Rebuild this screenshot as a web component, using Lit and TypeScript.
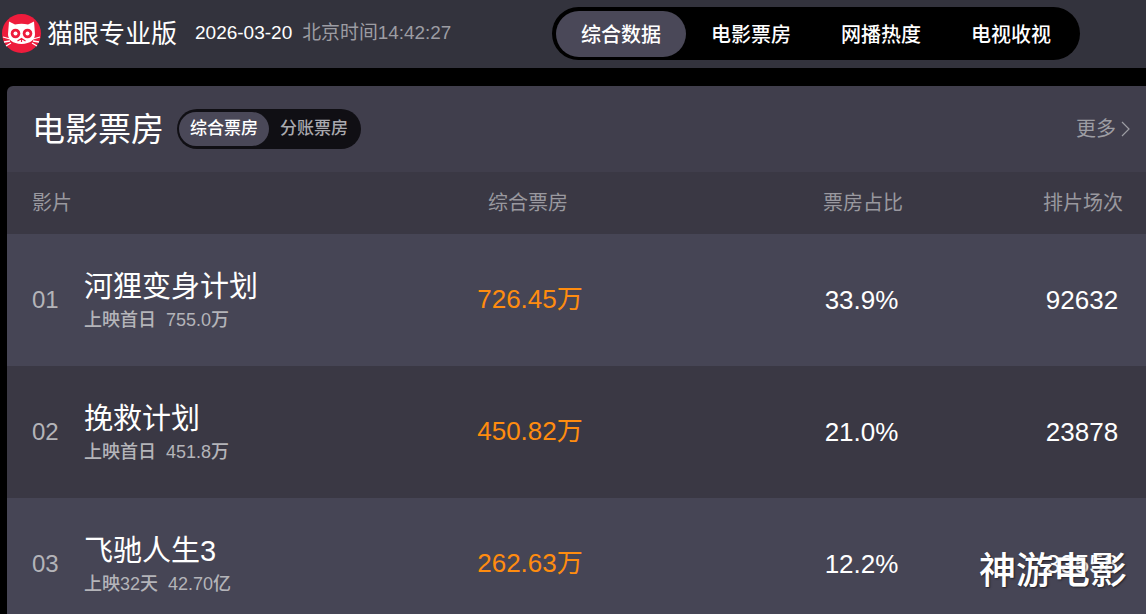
import { LitElement, html, css } from "lit";
import { customElement } from "lit/decorators.js";

const rows = [
  { no: "01", name: "河狸变身计划", days: "上映首日", total: "755.0万", box: "726.45万", share: "33.9%", shows: "92632" },
  { no: "02", name: "挽救计划", days: "上映首日", total: "451.8万", box: "450.82万", share: "21.0%", shows: "23878" },
  { no: "03", name: "飞驰人生3", days: "上映32天", total: "42.70亿", box: "262.63万", share: "12.2%", shows: "33558" },
];

@customElement("app-root")
export class AppRoot extends LitElement {
  static styles = css`
    :host {
      display: block;
      width: 1146px;
      height: 614px;
      overflow: hidden;
      position: relative;
      background: #000;
      color: #fff;
      font-family: "Liberation Sans", "Noto Sans CJK SC", sans-serif;
    }
    .top {
      height: 68px;
      background: #33333d;
      display: flex;
      align-items: center;
      position: relative;
    }
    .logo { width: 40px; height: 40px; margin: 0 0 0 2px; flex: none; }
    .brand { font-size: 26px; margin-left: 5px; white-space: nowrap; line-height: 26px; }
    .date { font-size: 19px; line-height: 22px; margin-left: 18px; margin-bottom: 3px; white-space: nowrap; }
    .time { font-size: 18.9px; line-height: 22px; margin-left: 10px; margin-bottom: 3px; color: #9d9da3; white-space: nowrap; }
    .nav {
      margin-left: auto;
      margin-right: 66px;
      margin-bottom: 2px;
      display: flex;
      height: 53px;
      box-sizing: border-box;
      padding: 4px;
      background: #000;
      border-radius: 27px;
    }
    .nav div {
      width: 130px;
      height: 46px;
      line-height: 46px;
      text-align: center;
      font-size: 20px;
      font-weight: 500;
      border-radius: 23px;
    }
    .nav div span { position: relative; top: 1px; }
    .nav .on { background: #4a4858; }
    .card {
      margin: 18px 0 0 7px;
      border-radius: 6px 0 0 0;
      overflow: hidden;
    }
    .head {
      height: 86px;
      background: #403e4c;
      display: flex;
      align-items: center;
      padding: 0 16px 0 25px;
    }
    .title { font-size: 33px; line-height: 1; width: 132px; white-space: nowrap; }
    .tabs {
      margin-left: 13px;
      display: flex;
      height: 40px;
      box-sizing: border-box;
      padding: 3px 2px;
      background: #100f14;
      border-radius: 20px;
    }
    .tabs div {
      width: 90px;
      height: 34px;
      line-height: 34px;
      text-align: center;
      font-size: 17px;
      font-weight: 500;
      color: #a9a9ae;
      border-radius: 17px;
    }
    .tabs .on { background: #4a4858; color: #fff; }
    .more {
      margin-left: auto;
      display: flex;
      align-items: center;
      gap: 5px;
      font-size: 20px;
      line-height: 24px;
      color: #9d9da3;
    }
    .grid {
      display: grid;
      grid-template-columns: 52px 274px 340px 330px 110px;
      align-items: center;
      padding-left: 25px;
    }
    .th {
      height: 62px;
      box-sizing: border-box;
      background: #3a3844;
      font-size: 20px;
      line-height: 24px;
      color: #99989f;
    }
    .c2 { grid-column: 1 / span 2; }
    .center { text-align: center; }
    .row { height: 132px; font-size: 26px; line-height: 30px; background: #464555; }
    .row.alt { background: #3a3844; }
    .no { font-size: 24px; color: #b4b4b9; }
    .info { padding-top: 2px; }
    .name { font-size: 29px; line-height: 34px; white-space: nowrap; }
    .sub { font-size: 18px; line-height: 24px; margin-top: 4px; font-weight: 500; color: #b4b4b9; white-space: nowrap; }
    .sub span { margin-left: 10px; }
    .box { color: #ff8c0f; padding-left: 4px; padding-bottom: 2px; }
    .share { padding-right: 3px; }
    .shows { padding-right: 2px; }
    .mark {
      position: absolute;
      left: 979px;
      top: 549px;
      font-size: 37px;
      line-height: 46px;
      font-weight: 500;
      white-space: nowrap;
      text-shadow: 1px 1px 2px rgba(0, 0, 0, 0.55);
    }
  `;

  render() {
    return html`
      <div class="top">
        <svg class="logo" viewBox="0 0 40 40">
          <circle cx="19.5" cy="19.5" r="19.5" fill="#ee1c3c" />
          <path d="M7 7.5 L13 10.5 Q19.5 9 26 10.5 L32 7.5 L33 20 Q33 29 19.5 30 Q6 29 6 20 Z" fill="#fff" />
          <circle cx="13.5" cy="19.5" r="4.8" fill="#ee1c3c" />
          <circle cx="25.5" cy="19.5" r="4.8" fill="#ee1c3c" />
          <circle cx="13.5" cy="19.5" r="2" fill="#fff" />
          <circle cx="25.5" cy="19.5" r="2" fill="#fff" />
          <path d="M15.5 27 L19.5 24.5 L23.5 27 M19.5 24.5 V28" stroke="#ee1c3c" stroke-width="1.2" fill="none" />
          <path d="M1 23 L8 25 M2 28 L8 27 M4 32 L9 29 M38 23 L31 25 M37 28 L31 27 M35 32 L30 29" stroke="#fff" stroke-width="1.3" fill="none" />
        </svg>
        <div class="brand">猫眼专业版</div>
        <div class="date">2026-03-20</div>
        <div class="time">北京时间14:42:27</div>
        <div class="nav">
          <div class="on"><span>综合数据</span></div>
          <div><span>电影票房</span></div>
          <div><span>网播热度</span></div>
          <div><span>电视收视</span></div>
        </div>
      </div>
      <div class="card">
        <div class="head">
          <div class="title">电影票房</div>
          <div class="tabs">
            <div class="on">综合票房</div>
            <div>分账票房</div>
          </div>
          <div class="more">
            更多
            <svg width="9" height="16" viewBox="0 0 9 16"><path d="M1 1 L8 8 L1 15" stroke="#9d9da3" stroke-width="1.2" fill="none" /></svg>
          </div>
        </div>
        <div class="grid th">
          <div class="c2">影片</div>
          <div class="center">综合票房</div>
          <div class="center">票房占比</div>
          <div class="center">排片场次</div>
        </div>
        ${rows.map(
          (r, i) => html`
            <div class="grid row ${i % 2 ? "alt" : ""}">
              <div class="no">${r.no}</div>
              <div class="info">
                <div class="name">${r.name}</div>
                <div class="sub">${r.days}<span>${r.total}</span></div>
              </div>
              <div class="center box">${r.box}</div>
              <div class="center share">${r.share}</div>
              <div class="center shows">${r.shows}</div>
            </div>
          `
        )}
      </div>
      <div class="mark">神游电影</div>
    `;
  }
}
